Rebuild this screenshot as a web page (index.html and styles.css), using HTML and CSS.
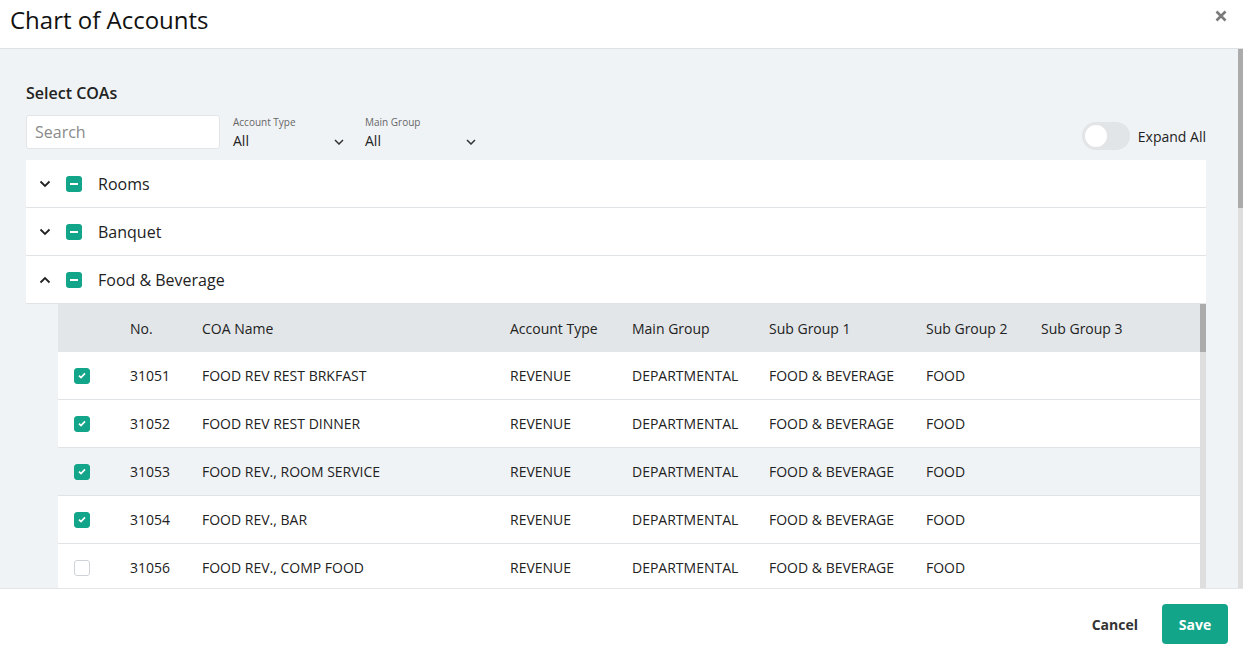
FILE: index.html
```html
<!DOCTYPE html>
<html lang="en">
<head>
<meta charset="utf-8">
<title>Chart of Accounts</title>
<link rel="stylesheet" href="styles.css">
</head>
<body>
<div class="modal">
  <header class="modal-header">
    <h1 class="modal-title">Chart of Accounts</h1>
    <button class="close-btn" aria-label="Close">
      <svg width="12" height="12" viewBox="0 0 12 12"><path d="M1.5 1.5 L10.5 10.5 M10.5 1.5 L1.5 10.5" stroke="#7a7a7a" stroke-width="2.6" stroke-linecap="butt"/></svg>
    </button>
  </header>

  <div class="modal-body">
    <div class="body-content">
      <h2 class="section-title">Select COAs</h2>
      <div class="filters">
        <input class="search" type="text" placeholder="Search">
        <div class="select">
          <span class="select-label">Account Type</span>
          <span class="select-value">All</span>
          <svg class="select-chev" width="10" height="6" viewBox="0 0 10 6"><path d="M1 1 L5 5 L9 1" fill="none" stroke="#333" stroke-width="1.5"/></svg>
        </div>
        <div class="select">
          <span class="select-label">Main Group</span>
          <span class="select-value">All</span>
          <svg class="select-chev" width="10" height="6" viewBox="0 0 10 6"><path d="M1 1 L5 5 L9 1" fill="none" stroke="#333" stroke-width="1.5"/></svg>
        </div>
        <div class="spacer"></div>
        <label class="toggle-wrap">
          <span class="toggle"><span class="knob"></span></span>
          <span class="toggle-text">Expand All</span>
        </label>
      </div>

      <div class="groups">
        <div class="group-row">
          <svg class="chev" width="12" height="8" viewBox="0 0 12 8"><path d="M1.5 1.5 L6 6 L10.5 1.5" fill="none" stroke="#222" stroke-width="1.8"/></svg>
          <span class="cb cb-partial"><span class="dash"></span></span>
          <span class="group-name">Rooms</span>
        </div>
        <div class="group-row">
          <svg class="chev" width="12" height="8" viewBox="0 0 12 8"><path d="M1.5 1.5 L6 6 L10.5 1.5" fill="none" stroke="#222" stroke-width="1.8"/></svg>
          <span class="cb cb-partial"><span class="dash"></span></span>
          <span class="group-name">Banquet</span>
        </div>
        <div class="group-row">
          <svg class="chev" width="12" height="8" viewBox="0 0 12 8"><path d="M1.5 6.5 L6 2 L10.5 6.5" fill="none" stroke="#222" stroke-width="1.8"/></svg>
          <span class="cb cb-partial"><span class="dash"></span></span>
          <span class="group-name">Food &amp; Beverage</span>
        </div>

        <div class="group-detail">
          <div class="table-wrap">
            <div class="table">
              <div class="trow thead">
                <span></span>
                <span>No.</span>
                <span>COA Name</span>
                <span>Account Type</span>
                <span>Main Group</span>
                <span>Sub Group 1</span>
                <span>Sub Group 2</span>
                <span>Sub Group 3</span>
              </div>
              <div class="trow">
                <span><span class="rcb checked"><svg width="8" height="7" viewBox="0 0 8 7"><path d="M1 3.6 L3 5.5 L7 1.3" fill="none" stroke="#fff" stroke-width="1.7"/></svg></span></span>
                <span>31051</span><span>FOOD REV REST BRKFAST</span><span>REVENUE</span><span>DEPARTMENTAL</span><span>FOOD &amp; BEVERAGE</span><span>FOOD</span><span></span>
              </div>
              <div class="trow">
                <span><span class="rcb checked"><svg width="8" height="7" viewBox="0 0 8 7"><path d="M1 3.6 L3 5.5 L7 1.3" fill="none" stroke="#fff" stroke-width="1.7"/></svg></span></span>
                <span>31052</span><span>FOOD REV REST DINNER</span><span>REVENUE</span><span>DEPARTMENTAL</span><span>FOOD &amp; BEVERAGE</span><span>FOOD</span><span></span>
              </div>
              <div class="trow alt">
                <span><span class="rcb checked"><svg width="8" height="7" viewBox="0 0 8 7"><path d="M1 3.6 L3 5.5 L7 1.3" fill="none" stroke="#fff" stroke-width="1.7"/></svg></span></span>
                <span>31053</span><span>FOOD REV., ROOM SERVICE</span><span>REVENUE</span><span>DEPARTMENTAL</span><span>FOOD &amp; BEVERAGE</span><span>FOOD</span><span></span>
              </div>
              <div class="trow">
                <span><span class="rcb checked"><svg width="8" height="7" viewBox="0 0 8 7"><path d="M1 3.6 L3 5.5 L7 1.3" fill="none" stroke="#fff" stroke-width="1.7"/></svg></span></span>
                <span>31054</span><span>FOOD REV., BAR</span><span>REVENUE</span><span>DEPARTMENTAL</span><span>FOOD &amp; BEVERAGE</span><span>FOOD</span><span></span>
              </div>
              <div class="trow">
                <span><span class="rcb"></span></span>
                <span>31056</span><span>FOOD REV., COMP FOOD</span><span>REVENUE</span><span>DEPARTMENTAL</span><span>FOOD &amp; BEVERAGE</span><span>FOOD</span><span></span>
              </div>
            </div>
            <div class="inner-scroll"><div class="inner-thumb"></div></div>
          </div>
        </div>
      </div>
    </div>
    <div class="outer-scroll"><div class="outer-thumb"></div></div>
  </div>

  <footer class="modal-footer">
    <button class="btn-cancel">Cancel</button>
    <button class="btn-save">Save</button>
  </footer>
</div>
</body>
</html>
```

FILE: styles.css
```css
* { box-sizing: border-box; }
html, body {
  margin: 0;
  padding: 0;
  width: 1243px;
  height: 654px;
  overflow: hidden;
  font-family: "Open Sans", "Noto Sans", sans-serif;
  color: #222;
  background: #fff;
}
.modal {
  width: 1243px;
  height: 654px;
  display: flex;
  flex-direction: column;
}
.modal-header {
  height: 49px;
  flex: 0 0 49px;
  border-bottom: 1px solid #dfe2e5;
  display: flex;
  align-items: flex-start;
  justify-content: space-between;
  padding: 0 0 0 10px;
}
.modal-title {
  margin: 0;
  font-size: 24px;
  font-weight: 400;
  line-height: 40px;
  color: #111;
}
.close-btn {
  border: 0;
  background: none;
  padding: 0;
  margin: 10px 16px 0 0;
  width: 12px;
  height: 12px;
  display: flex;
}
.modal-body {
  flex: 1 1 auto;
  min-height: 0;
  display: flex;
  background: #f0f3f6;
  overflow: hidden;
}
.body-content {
  flex: 1 1 auto;
  padding: 33px 32px 0 26px;
  min-width: 0;
}
.outer-scroll {
  flex: 0 0 5px;
  background: #dedede;
}
.outer-thumb {
  height: 159px;
  background: #ababab;
}
.section-title {
  margin: 0;
  font-size: 16px;
  font-weight: 600;
  line-height: 22px;
  color: #222;
}
.filters {
  display: flex;
  align-items: flex-start;
  margin-top: 11px;
  height: 34px;
}
.search {
  width: 194px;
  height: 34px;
  border: 1px solid #e3e6e9;
  border-radius: 3px;
  background: #fff;
  padding: 0 8px;
  font-family: inherit;
  font-size: 16px;
  color: #222;
  outline: none;
}
.search::placeholder { color: #8a8a8a; }
.select {
  position: relative;
  width: 111px;
  margin-left: 13px;
  display: flex;
  flex-direction: column;
  height: 34px;
}
.select + .select { margin-left: 21px; }
.select-label {
  font-size: 10px;
  line-height: 14px;
  color: #666;
}
.select-value {
  margin-top: 2px;
  font-size: 14px;
  line-height: 20px;
  color: #222;
}
.select-chev {
  position: absolute;
  right: 0;
  top: 24px;
}
.spacer { flex: 1 1 auto; }
.toggle-wrap {
  display: flex;
  align-items: center;
  gap: 8px;
  margin-top: 7px;
}
.toggle {
  width: 48px;
  height: 28px;
  border-radius: 14px;
  background: #e2e5e8;
  display: flex;
  align-items: center;
  padding-left: 3px;
}
.knob {
  width: 22px;
  height: 22px;
  border-radius: 50%;
  background: #fff;
}
.toggle-text {
  font-size: 14px;
  color: #222;
}
.groups {
  margin-top: 11px;
}
.group-row {
  height: 48px;
  background: #fff;
  border-bottom: 1px solid #e0e3e6;
  display: flex;
  align-items: center;
  padding-left: 13px;
}
.chev { flex: 0 0 12px; }
.cb {
  width: 16px;
  height: 16px;
  border-radius: 3px;
  margin-left: 15px;
  display: flex;
  align-items: center;
  justify-content: center;
}
.cb-partial { background: #13a589; }
.dash {
  width: 8px;
  height: 2px;
  background: #fff;
}
.group-name {
  margin-left: 16px;
  font-size: 16px;
  color: #222;
}
.group-detail {
  padding-left: 32px;
}
.table-wrap {
  display: flex;
  background: #fff;
}
.table { flex: 1 1 auto; }
.inner-scroll {
  flex: 0 0 6px;
  background: #dedede;
}
.inner-thumb {
  height: 48px;
  background: #ababab;
}
.trow {
  display: grid;
  grid-template-columns: 56px 72px 308px 122px 137px 157px 115px 1fr;
  align-items: center;
  height: 48px;
  padding-left: 16px;
  border-bottom: 1px solid #e0e3e6;
  font-size: 14px;
  color: #222;
  background: #fff;
}
.trow.thead {
  background: #e3e6e9;
  border-bottom: 0;
}
.trow.alt { background: #f0f3f6; }
.rcb {
  width: 16px;
  height: 16px;
  border-radius: 3px;
  border: 1px solid #cfd3d7;
  background: #fff;
  display: flex;
  align-items: center;
  justify-content: center;
}
.rcb.checked {
  background: #13a589;
  border-color: #13a589;
}
.modal-footer {
  flex: 0 0 66px;
  height: 66px;
  border-top: 1px solid #e3e6e9;
  background: #fff;
  display: flex;
  align-items: center;
  justify-content: flex-end;
  padding: 5px 15px 0 0;
  gap: 24px;
}
.btn-cancel {
  border: 0;
  background: none;
  font-family: inherit;
  font-size: 14px;
  font-weight: 700;
  color: #333;
  padding: 0;
}
.btn-save {
  width: 66px;
  height: 40px;
  border: 0;
  border-radius: 4px;
  background: #13a589;
  color: #fff;
  font-family: inherit;
  font-size: 14px;
  font-weight: 700;
}
```
